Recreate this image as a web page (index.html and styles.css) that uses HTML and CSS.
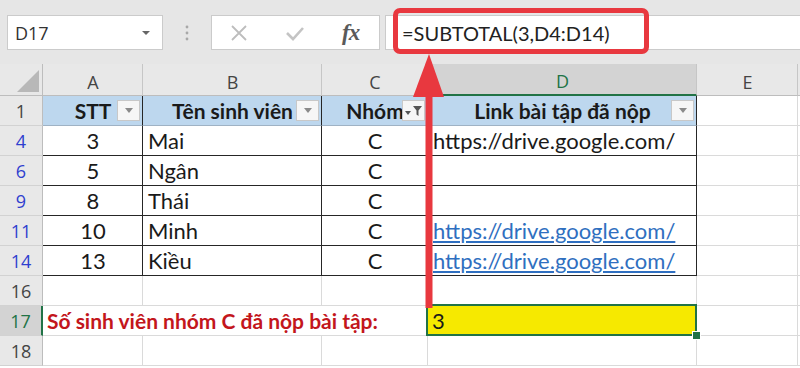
FILE: index.html
```html
<!DOCTYPE html>
<html>
<head>
  <title>SUBTOTAL</title>
  <link rel="stylesheet" href="styles.css">
</head>
<body>
  <div class="app">
    <div class="formula-bar">
      <div class="name-box">
        <span>D17</span>
        <span class="caret"></span>
      </div>
      <div class="grip">
        <svg width="4" height="16" viewBox="0 0 4 16"><circle cx="2" cy="2" r="1.4" fill="#a8a8a8"/><circle cx="2" cy="8" r="1.4" fill="#a8a8a8"/><circle cx="2" cy="14" r="1.4" fill="#a8a8a8"/></svg>
      </div>
      <div class="fx-buttons">
        <svg class="icon" width="18" height="18" viewBox="0 0 18 18"><path d="M2 2 L16 16 M16 2 L2 16" stroke="#bdbdbd" stroke-width="1.8" fill="none"/></svg>
        <svg class="icon" width="18" height="18" viewBox="0 0 18 18"><path d="M1 9 L7 15 L17 4" stroke="#c4c4c4" stroke-width="2.6" fill="none"/></svg>
        <span class="fx">fx</span>
      </div>
      <div class="formula-input">=SUBTOTAL(3,D4:D14)</div>
    </div>

    <div class="sheet">
      <!-- column headers -->
      <div class="cell corner"><span class="corner-mark"></span></div>
      <div class="cell ch">A</div>
      <div class="cell ch">B</div>
      <div class="cell ch">C</div>
      <div class="cell ch ch-active">D</div>
      <div class="cell ch">E</div>
      <div class="cell ch"></div>

      <!-- row 1 -->
      <div class="cell rh rh-plain">1</div>
      <div class="cell hdr tb">STT<span class="filter"><span class="tri"></span></span></div>
      <div class="cell hdr tb">Tên sinh viên<span class="filter"><span class="tri"></span></span></div>
      <div class="cell hdr tb">Nhóm<span class="filter filter-on"><span class="tri tri-small"></span><svg width="9" height="10" viewBox="0 0 9 10"><path d="M0 0 H9 L5.5 4.5 V10 L3.5 8.5 V4.5 Z" fill="#555"/></svg></span></div>
      <div class="cell hdr tb">Link bài tập đã nộp<span class="filter"><span class="tri"></span></span></div>
      <div class="cell"></div>
      <div class="cell"></div>

      <!-- row 4 -->
      <div class="cell rh">4</div>
      <div class="cell tb tr center">3</div>
      <div class="cell tb tr">Mai</div>
      <div class="cell tb tr center">C</div>
      <div class="cell tb tr">https://drive.google.com/</div>
      <div class="cell"></div>
      <div class="cell"></div>

      <!-- row 6 -->
      <div class="cell rh">6</div>
      <div class="cell tb tr center">5</div>
      <div class="cell tb tr">Ngân</div>
      <div class="cell tb tr center">C</div>
      <div class="cell tb tr"></div>
      <div class="cell"></div>
      <div class="cell"></div>

      <!-- row 9 -->
      <div class="cell rh">9</div>
      <div class="cell tb tr center">8</div>
      <div class="cell tb tr">Thái</div>
      <div class="cell tb tr center">C</div>
      <div class="cell tb tr"></div>
      <div class="cell"></div>
      <div class="cell"></div>

      <!-- row 11 -->
      <div class="cell rh">11</div>
      <div class="cell tb tr center">10</div>
      <div class="cell tb tr">Minh</div>
      <div class="cell tb tr center">C</div>
      <div class="cell tb tr"><span class="link">https://drive.google.com/</span></div>
      <div class="cell"></div>
      <div class="cell"></div>

      <!-- row 14 -->
      <div class="cell rh">14</div>
      <div class="cell tb tr center">13</div>
      <div class="cell tb tr">Kiều</div>
      <div class="cell tb tr center">C</div>
      <div class="cell tb tr"><span class="link">https://drive.google.com/</span></div>
      <div class="cell"></div>
      <div class="cell"></div>

      <!-- row 16 -->
      <div class="cell rh rh-plain">16</div>
      <div class="cell"></div>
      <div class="cell"></div>
      <div class="cell"></div>
      <div class="cell"></div>
      <div class="cell"></div>
      <div class="cell"></div>

      <!-- row 17 -->
      <div class="cell rh rh-active">17</div>
      <div class="cell label">Số sinh viên nhóm C đã nộp bài tập:</div>
      <div class="cell result">3</div>
      <div class="cell"></div>
      <div class="cell"></div>

      <!-- row 18 -->
      <div class="cell rh rh-plain">18</div>
      <div class="cell"></div>
      <div class="cell"></div>
      <div class="cell"></div>
      <div class="cell"></div>
      <div class="cell"></div>
      <div class="cell"></div>
    </div>

    <div class="callout"></div>
    <svg class="arrow" width="40" height="260" viewBox="0 0 40 260">
      <rect x="15.5" y="38" width="7" height="218" fill="#e8383f"/>
      <path d="M19 2 L34 45 L3 45 Z" fill="#e8383f"/>
    </svg>
  </div>
</body>
</html>
```

FILE: styles.css
```css
* {
  box-sizing: border-box;
}

body {
  margin: 0;
  background-color: #fff;
  font-family: Lato, "Liberation Sans", sans-serif;
}

.app {
  position: relative;
  width: 800px;
  height: 368px;
  overflow: hidden;
}

/* formula bar */

.formula-bar {
  display: flex;
  align-items: flex-start;
  height: 64px;
  padding: 15px 0 0 7px;
  background-color: #e6e6e6;
}

.name-box {
  display: flex;
  align-items: center;
  justify-content: space-between;
  width: 156px;
  height: 35px;
  padding: 0 12px 0 7px;
  background-color: #fff;
  border: 1px solid #cbcbcb;
  font-family: "Open Sans", sans-serif;
  font-size: 18px;
  color: #333;
}

.caret {
  width: 0;
  height: 0;
  border-left: 4px solid transparent;
  border-right: 4px solid transparent;
  border-top: 4px solid #666;
}

.grip {
  display: flex;
  align-items: center;
  justify-content: center;
  width: 48px;
  height: 35px;
}

.fx-buttons {
  display: flex;
  align-items: center;
  width: 169px;
  height: 35px;
  padding-left: 18px;
  gap: 38px;
  background-color: #fff;
  border: 1px solid #cbcbcb;
}

.fx {
  font-family: "Liberation Serif", serif;
  font-style: italic;
  font-weight: bold;
  font-size: 23px;
  color: #5a5a5a;
  letter-spacing: -1px;
}

.formula-input {
  display: flex;
  align-items: center;
  flex: 1;
  height: 35px;
  margin-left: 5px;
  padding-left: 16px;
  background-color: #fff;
  border: 1px solid #cbcbcb;
  border-right: none;
  font-size: 20px;
  color: #222;
}

/* sheet */

.sheet {
  display: grid;
  grid-template-columns: 43px 100px 179px 106px 269px 101px 2px;
  grid-template-rows: 32px repeat(9, 30px);
}

.cell {
  display: flex;
  align-items: center;
  padding: 0 4px 0 5px;
  border-right: 1px solid #dadada;
  border-bottom: 1px solid #dadada;
  font-size: 22px;
  color: #1a1a1a;
  white-space: nowrap;
  position: relative;
}

.corner {
  background-color: #e8e8e8;
  border-right-color: #bdbdbd;
  border-bottom-color: #bdbdbd;
}

.corner-mark {
  position: absolute;
  right: 3px;
  bottom: 3px;
  width: 0;
  height: 0;
  border-left: 22px solid transparent;
  border-bottom: 22px solid #b8b8b8;
}

.ch {
  justify-content: center;
  padding-top: 4px;
  background-color: #e8e8e8;
  border-right-color: #c6c6c6;
  border-bottom-color: #bdbdbd;
  font-family: "Open Sans", sans-serif;
  font-size: 18px;
  color: #444;
}

.ch-active {
  background-color: #d3d3d3;
  border-bottom: 2px solid #217346;
  color: #217346;
}

.rh {
  justify-content: center;
  padding: 0;
  background-color: #e8e8e8;
  border-right-color: #bdbdbd;
  border-bottom-color: #d2d2d2;
  font-family: "Open Sans", sans-serif;
  font-size: 18px;
  color: #2f3fcf;
}

.rh-plain {
  color: #444;
}

.rh-active {
  background-color: #d3d3d3;
  border-right: 2px solid #217346;
  color: #217346;
}

.center {
  justify-content: center;
}

.hdr {
  justify-content: center;
  background-color: #bdd7ee;
  border-bottom-color: #9fb2c4;
  font-size: 21px;
  font-weight: bold;
}

.tb {
  border-right-color: #262626;
}

.tr {
  border-bottom-color: #262626;
}

.filter {
  position: absolute;
  right: 2px;
  top: 4px;
  display: flex;
  align-items: center;
  justify-content: center;
  gap: 2px;
  width: 23px;
  height: 21px;
  background-color: #f6f6f6;
  border: 1px solid #c8c8c8;
}

.tri {
  width: 0;
  height: 0;
  border-left: 4px solid transparent;
  border-right: 4px solid transparent;
  border-top: 5px solid #8a8a8a;
}

.tri-small {
  border-left-width: 3px;
  border-right-width: 3px;
  border-top: 4px solid #555;
  margin-top: 5px;
}

.link {
  color: #2f6fc0;
  text-decoration: underline;
}

.label {
  grid-column: span 3;
  padding-left: 4px;
  font-size: 21px;
  font-weight: bold;
  color: #c3161c;
}

.result {
  padding-left: 4px;
  background-color: #f6e900;
}

.result::after {
  content: "";
  position: absolute;
  left: -2px;
  top: -2px;
  right: -1px;
  bottom: -1px;
  border: 2px solid #217346;
}

.result::before {
  content: "";
  position: absolute;
  right: -5px;
  bottom: -5px;
  width: 7px;
  height: 7px;
  background-color: #217346;
  border: 1px solid #fff;
  z-index: 1;
}

/* annotation */

.callout {
  position: absolute;
  left: 393px;
  top: 8px;
  width: 256px;
  height: 46px;
  border: 5px solid #e8383f;
  border-radius: 7px;
}

.arrow {
  position: absolute;
  left: 410px;
  top: 52px;
}
```
